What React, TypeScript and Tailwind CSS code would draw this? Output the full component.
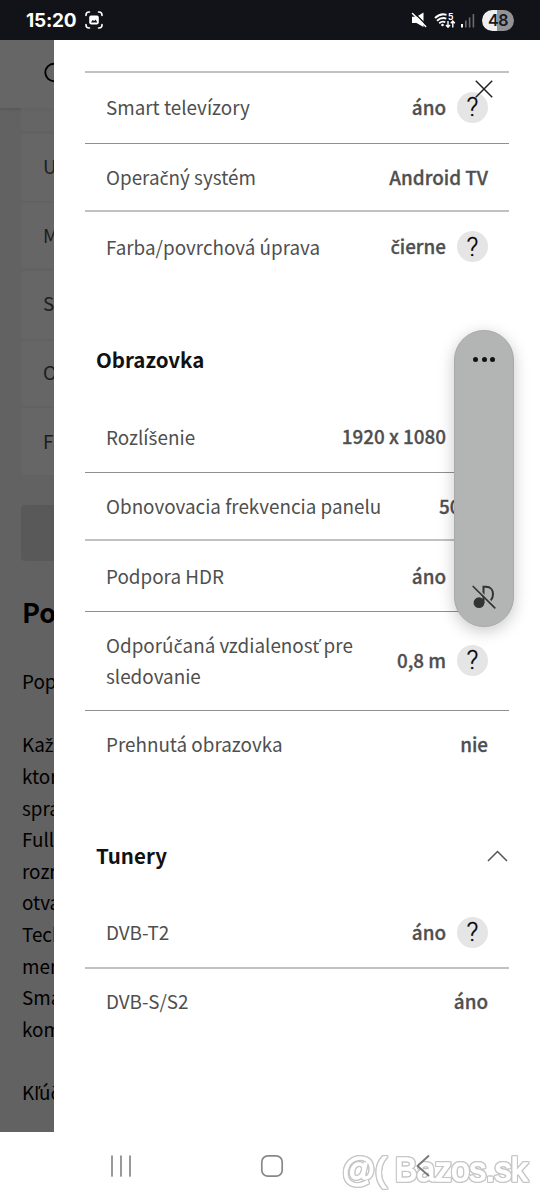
import { Fragment } from 'react';
import clsx from 'clsx';

type Spec = { label: string[]; value: string; help?: boolean; box: string };

// box holds the row height plus its top divider
const generalSpecs: Spec[] = [
  { label: ['Smart televízory'], value: 'áno', help: true, box: 'h-[72px] border-t-2 border-[#c0c1c0]' },
  { label: ['Operačný systém'], value: 'Android TV', box: 'h-[67px] border-t border-[#8f8f8f] pt-0.5' },
  { label: ['Farba/povrchová úprava'], value: 'čierne', help: true, box: 'h-[73px] border-t-2 border-[#c0c1c0]' },
];

const screenSpecs: Spec[] = [
  { label: ['Rozlíšenie'], value: '1920 x 1080', help: true, box: 'h-[69px]' },
  { label: ['Obnovovacia frekvencia panelu'], value: '50 Hz', box: 'h-[67px] border-t border-[#8f8f8f] pt-0.5' },
  { label: ['Podpora HDR'], value: 'áno', help: true, box: 'h-[72px] border-t-2 border-[#c0c1c0] pt-0.5' },
  {
    label: ['Odporúčaná vzdialenosť pre', 'sledovanie'],
    value: '0,8 m',
    help: true,
    box: 'h-[99px] border-t border-[#8f8f8f]',
  },
  { label: ['Prehnutá obrazovka'], value: 'nie', box: 'h-[69px] border-t border-[#8f8f8f]' },
];

const tunerSpecs: Spec[] = [
  { label: ['DVB-T2'], value: 'áno', help: true, box: 'h-[68px]' },
  { label: ['DVB-S/S2'], value: 'áno', box: 'h-[68px] border-t-2 border-[#c0c1c0]' },
];

const cards = [
  { text: 'Uhlopriečka', box: 'h-[67px]' },
  { text: 'Model', box: 'h-[65px]' },
  { text: 'Smart televízory', box: 'h-[68px]' },
  { text: 'Operačný systém', box: 'h-[65px]' },
  { text: 'Farba/povrchová úprava', box: 'h-[67px]' },
];

const description = ['Každý', 'ktorý', 'správne', 'Full HD', 'rozmery', 'otvára', 'Technológia', 'menu', 'Smart', 'komfort'];

// the CJK face has no composed caron letters, take them from Noto Sans
function Text({ children }: { children: string }) {
  return (
    <span>
      {children.split(/([čťšžľ])/).map((part, i) =>
        i % 2 ? (
          <span key={i} className="font-['Noto_Sans'] leading-none">
            {part}
          </span>
        ) : (
          <Fragment key={i}>{part}</Fragment>
        ),
      )}
    </span>
  );
}

function StatusBar() {
  return (
    <header className="flex h-10 shrink-0 items-center justify-between bg-[#111318] pr-[26px] pl-[26px] text-white">
      <div className="flex items-center gap-[9px]">
        <span className="font-[Inter] text-[19px] leading-none font-bold tracking-[-0.200px]">15:20</span>
        <svg width="18" height="18" viewBox="0 0 18 18" fill="none" stroke="white" strokeWidth="1.6" strokeLinecap="round">
          <path d="M1 4.5V4a3 3 0 0 1 3-3h.5M13.500 1h.5a3 3 0 0 1 3 3v.5M17 13.500v.5a3 3 0 0 1-3 3h-.5M4.500 17H4a3 3 0 0 1-3-3v-.5" />
          <rect x="4.200" y="4.600" width="9.600" height="8.800" rx="1.800" fill="white" stroke="none" />
          <path d="M5.800 11.500l2-2.500 1.500 1 1.300-1.500 1.700 3z" fill="#111318" stroke="none" />
        </svg>
      </div>
      <div className="flex items-center">
        <svg width="16" height="16" viewBox="0 0 16 16" className="mr-[7px]">
          <path d="M1 4.800h4.500L12.500 .5v14.500L5.500 11H1z" fill="white" />
          <path d="M2.500 .2l13.500 13.300" stroke="#111318" strokeWidth="1.300" />
          <path d="M1.500 1.500l13.200 13" stroke="white" strokeWidth="1.500" strokeLinecap="round" />
        </svg>
        <svg width="22" height="17" viewBox="0 0 22 17" className="mr-[5px]" fill="none" stroke="white" strokeWidth="1.800">
          <path d="M1 6Q6.500 .8 12.500 2.800M3 8.700Q7.500 4.800 12.300 6.600M5.200 11.200Q8.200 8.800 11.300 10.200" />
          <circle cx="8.500" cy="13" r="1.300" fill="white" stroke="none" />
          <path d="M14 9v6M12 13l2 2.200 2-2.200M18.800 15.500v-6M16.800 11.300l2-2.200 2 2.200" strokeWidth="1.400" />
          <text x="14" y="7.500" fill="white" stroke="none" fontFamily="Inter" fontSize="8.500" fontWeight="700">5</text>
        </svg>
        <svg width="14" height="15" viewBox="0 0 14 15" className="mr-[7px]">
          <rect x="0" y="11" width="2" height="3.500" fill="white" />
          <rect x="4" y="7.500" width="1.600" height="7" fill="#6b6c70" />
          <rect x="7.800" y="4.500" width="1.600" height="10" fill="#6b6c70" />
          <rect x="11.600" y="1" width="1.600" height="13.500" fill="#6b6c70" />
        </svg>
        <div className="flex h-[21px] w-8 items-center justify-center rounded-full bg-[linear-gradient(90deg,#efefef_48%,#929396_48%)] font-[Inter] text-[16px] font-semibold tracking-[-0.500px] text-[#17191d]">
          48
        </div>
      </div>
    </header>
  );
}

function BackgroundPage() {
  return (
    <div className="h-full w-full overflow-hidden bg-[#f4f4f4] whitespace-nowrap text-black">
      <div className="flex h-[68px] items-center bg-white pl-11 shadow-[0_1px_3px_rgba(0,0,0,0.15)]">
        <svg width="24" height="24" viewBox="0 0 24 24" fill="none" stroke="black" strokeWidth="1.900" className="-mt-1">
          <circle cx="10" cy="12.500" r="8.700" />
          <path d="M16.500 18.500l5 5" />
        </svg>
      </div>
      <div className="pl-[21px]">
        <div className="h-[23px] bg-white/70" />
        <div className="mt-[3px] flex flex-col gap-[2.300px]">
          {cards.map((card) => (
            <div key={card.text} className={clsx('flex items-center rounded-[4px] bg-white pb-0.5 pl-[22px] text-[#4d4d4d]', card.box)}>
              <Text>{card.text}</Text>
            </div>
          ))}
        </div>
        <div className="mt-[30px] h-14 rounded-[4px] bg-[#dedede]" />
      </div>
      <div className="pl-[22px]">
        <h2 className="mt-[29px] text-[27px] leading-[44px] font-bold">Popis</h2>
        <p className="mt-[31px] leading-[31.600px]">Popis produktu</p>
        <div className="mt-[31.600px] leading-[31.600px]">
          {description.map((line) => (
            <p key={line}>
              <Text>{line}</Text>
            </p>
          ))}
        </div>
        <p className="mt-[31.600px] leading-[31.600px]">
          <Text>Kľúčové vlastnosti</Text>
        </p>
      </div>
    </div>
  );
}

function SpecRow({ label, value, help, box }: Spec) {
  return (
    <div className={clsx('flex items-center justify-between px-[21px] text-[#4f4f4f]', box)}>
      <div className="mb-0.5 leading-[31.500px]">
        {label.map((line) => (
          <p key={line}>
            <Text>{line}</Text>
          </p>
        ))}
      </div>
      <div className="mb-0.5 flex items-center gap-[11px]">
        <span className="font-medium [-webkit-text-stroke:0.300px_#4f4f4f]">
          <Text>{value}</Text>
        </span>
        {help && (
          <span className="flex size-[31px] items-center justify-center rounded-full bg-[#e5e5e5] font-[Roboto] text-[26px] leading-none font-light text-black [-webkit-text-stroke:0.300px_#000]">
            ?
          </span>
        )}
      </div>
    </div>
  );
}

function SectionTitle({ children }: { children: string }) {
  return (
    <div className="flex h-[120px] items-center justify-between pt-8 pr-px pl-[11px]">
      <h3 className="text-[20.500px] font-bold text-[#111]">{children}</h3>
      <svg width="21" height="12" viewBox="0 0 21 12" fill="none" stroke="#555" strokeWidth="1.500" className="mt-0.5">
        <path d="M1 11L10.500 1.500 20 11" />
      </svg>
    </div>
  );
}

function VolumePanel() {
  return (
    <div className="absolute top-[290px] right-[26px] flex h-[297px] w-[60px] flex-col items-center justify-between rounded-full border border-[#a9a9a9] bg-[#b3b4b4] pt-[26px] pb-4 shadow-[0_4px_16px_rgba(0,0,0,0.22)]">
      <div className="flex gap-[3.500px]">
        <i className="size-[5px] rounded-full bg-[#111]" />
        <i className="size-[5px] rounded-full bg-[#111]" />
        <i className="size-[5px] rounded-full bg-[#111]" />
      </div>
      <svg width="24" height="25" viewBox="0 0 24 25" fill="none" stroke="#333" strokeWidth="2" strokeLinecap="round">
        <circle cx="7" cy="17.700" r="5.400" fill="#333" stroke="none" />
        <path d="M11.500 17.500V1.800H14c4.500 0 7 3 7 7.200 0 2.500-.8 4.500-2 6" />
        <path d="M2.200 .5L24 21.800" stroke="#b3b4b4" strokeWidth="1.500" />
        <path d="M1.200 1.500L22.800 22.800" strokeWidth="1.700" />
      </svg>
    </div>
  );
}

function NavBar() {
  return (
    <nav className="relative h-[68px] shrink-0 bg-white">
      <div className="flex items-center pt-[22px] pl-[110px]">
        <svg width="22" height="24" viewBox="0 0 22 24" stroke="#888" strokeWidth="1.700" strokeLinecap="round">
          <path d="M2 2v20M11 2v20M20 2v20" />
        </svg>
        <svg width="24" height="24" viewBox="0 0 24 24" fill="none" stroke="#888" strokeWidth="1.700" className="ml-32">
          <rect x="1.800" y="1.800" width="20.400" height="20.400" rx="6" />
        </svg>
        <svg width="15" height="24" viewBox="0 0 15 24" fill="none" stroke="#777" strokeWidth="1.800" className="relative z-10 ml-[131px]">
          <path d="M14 1.500L2.500 12 14 22" />
        </svg>
      </div>
      <div className="absolute top-5 left-[342px] font-['Liberation_Sans'] text-[33px] leading-9 tracking-[-0.200px] whitespace-pre text-white [-webkit-text-stroke:1.500px_white] [filter:drop-shadow(1px_0_0_#c6c6c6)_drop-shadow(-1px_0_0_#c6c6c6)_drop-shadow(0_1px_0_#c6c6c6)_drop-shadow(0_-1px_0_#c6c6c6)]">
        @( Bazos.sk
      </div>
    </nav>
  );
}

export default function App() {
  return (
    <div className="flex h-[1200px] w-[540px] flex-col overflow-hidden bg-white font-['Noto_Sans_CJK_JP','Noto_Sans',sans-serif] text-[18.850px]">
      <StatusBar />
      <main className="relative h-[1092px] shrink-0 overflow-hidden">
        <BackgroundPage />
        <div className="absolute inset-0 flex bg-black/60 pl-[54px]">
          <section className="w-full bg-white pt-[31px] pr-[31px] pl-[31px]">
            {generalSpecs.map((spec) => (
              <SpecRow key={spec.label[0]} {...spec} />
            ))}
            <SectionTitle>Obrazovka</SectionTitle>
            {screenSpecs.map((spec) => (
              <SpecRow key={spec.label[0]} {...spec} />
            ))}
            <SectionTitle>Tunery</SectionTitle>
            {tunerSpecs.map((spec) => (
              <SpecRow key={spec.label[0]} {...spec} />
            ))}
          </section>
        </div>
        <svg width="18" height="18" viewBox="0 0 18 18" stroke="#222" strokeWidth="1.500" className="absolute top-10 right-[47px]">
          <path d="M.8.8l16.400 16.400M17.200.8L.8 17.200" />
        </svg>
        <VolumePanel />
      </main>
      <NavBar />
    </div>
  );
}
